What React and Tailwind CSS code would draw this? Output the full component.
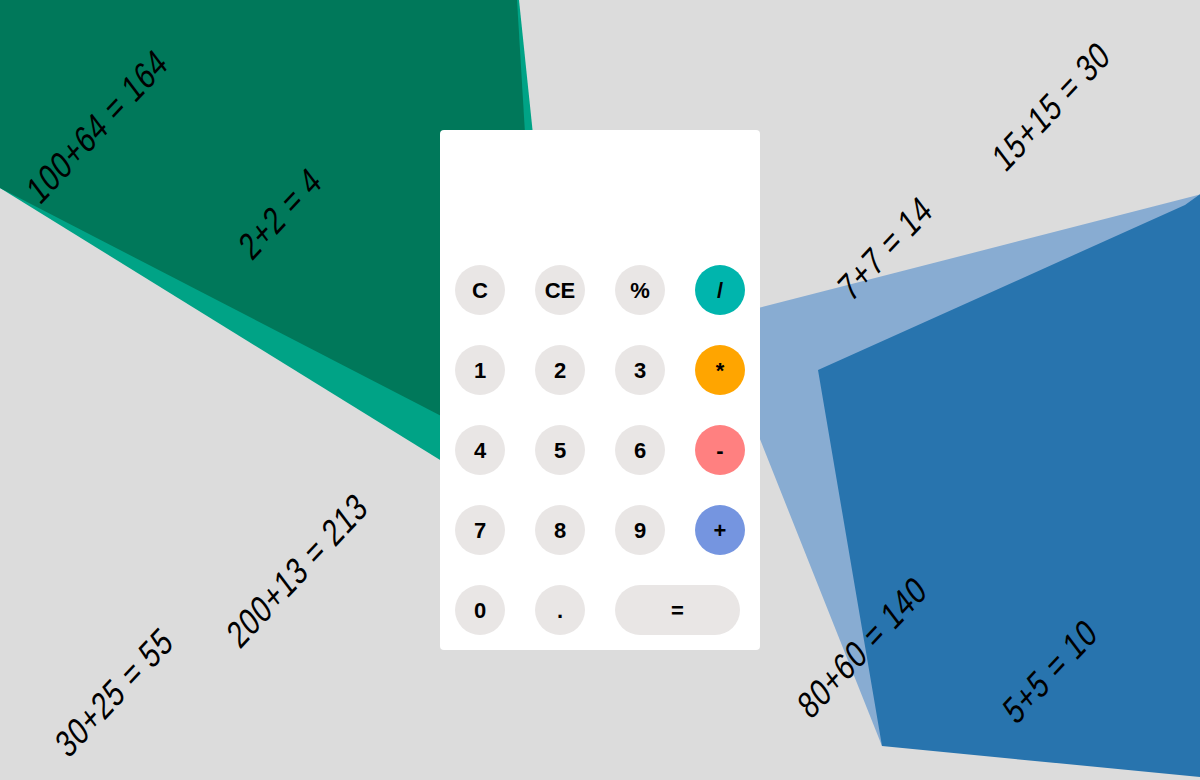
import React from 'react';

const sums = [
  { text: '100+64 = 164', x: 97, y: 126 },
  { text: '2+2 = 4', x: 280, y: 213 },
  { text: '7+7 = 14', x: 885, y: 248 },
  { text: '15+15 = 30', x: 1051, y: 106 },
  { text: '30+25 = 55', x: 114, y: 692 },
  { text: '200+13 = 213', x: 297, y: 570 },
  { text: '80+60 = 140', x: 862, y: 647 },
  { text: '5+5 = 10', x: 1050, y: 671 },
];

const keys = [
  { label: 'C', bg: 'bg-[#e9e6e5]' },
  { label: 'CE', bg: 'bg-[#e9e6e5]' },
  { label: '%', bg: 'bg-[#e9e6e5]' },
  { label: '/', bg: 'bg-[#00b5ad]' },
  { label: '1', bg: 'bg-[#e9e6e5]' },
  { label: '2', bg: 'bg-[#e9e6e5]' },
  { label: '3', bg: 'bg-[#e9e6e5]' },
  { label: '*', bg: 'bg-[#ffa500]' },
  { label: '4', bg: 'bg-[#e9e6e5]' },
  { label: '5', bg: 'bg-[#e9e6e5]' },
  { label: '6', bg: 'bg-[#e9e6e5]' },
  { label: '-', bg: 'bg-[#ff8080]' },
  { label: '7', bg: 'bg-[#e9e6e5]' },
  { label: '8', bg: 'bg-[#e9e6e5]' },
  { label: '9', bg: 'bg-[#e9e6e5]' },
  { label: '+', bg: 'bg-[#7595e0]' },
  { label: '0', bg: 'bg-[#e9e6e5]' },
  { label: '.', bg: 'bg-[#e9e6e5]' },
];

// background shapes behind the calculator
const Shapes = () => (
  <svg className="absolute inset-0 w-full h-full blur-[0.6px]" viewBox="0 0 1200 780" preserveAspectRatio="none">
    <polygon points="0,0 519,0 545,250 500,497 0,188" fill="#00a386" />
    <polygon points="0,0 517,0 535,300 480,436 0,188" fill="#00785a" />
    <polygon points="700,323 1210,192 1210,700 882,746 740,389" fill="#88acd2" />
    <polygon points="818,370 1185,205 1210,187 1210,778 882,746" fill="#2874ae" />
  </svg>
);

export default function App() {
  return (
    <div className="relative w-full h-screen overflow-hidden bg-[#dcdcdc] font-['Liberation_Sans',Arial,sans-serif]">
      <Shapes />

      {sums.map((s) => (
        <span
          key={s.text}
          className="absolute whitespace-nowrap text-[34px] tracking-[1px] leading-none text-black [transform:translate(-50%,-50%)_rotate(-47deg)_skewX(-10deg)_scale(0.86,1.05)]"
          style={{ left: s.x, top: s.y }}
        >
          {s.text}
        </span>
      ))}

      <div className="relative flex items-center justify-center h-full">
        <div className="w-[320px] h-[520px] bg-white rounded-[4px]">
          <div className="h-[120px]"></div>
          <div className="grid grid-cols-4 gap-[30px] px-[15px] pt-[15px]">
            {keys.map((k) => (
              <button
                key={k.label}
                className={`w-[50px] h-[50px] rounded-full ${k.bg} text-[22px] font-bold text-black flex items-center justify-center`}
              >
                {k.label}
              </button>
            ))}
            <button className="col-span-2 w-[125px] h-[50px] rounded-full bg-[#e9e6e5] text-[22px] font-bold text-black flex items-center justify-center">
              =
            </button>
          </div>
        </div>
      </div>
    </div>
  );
}
